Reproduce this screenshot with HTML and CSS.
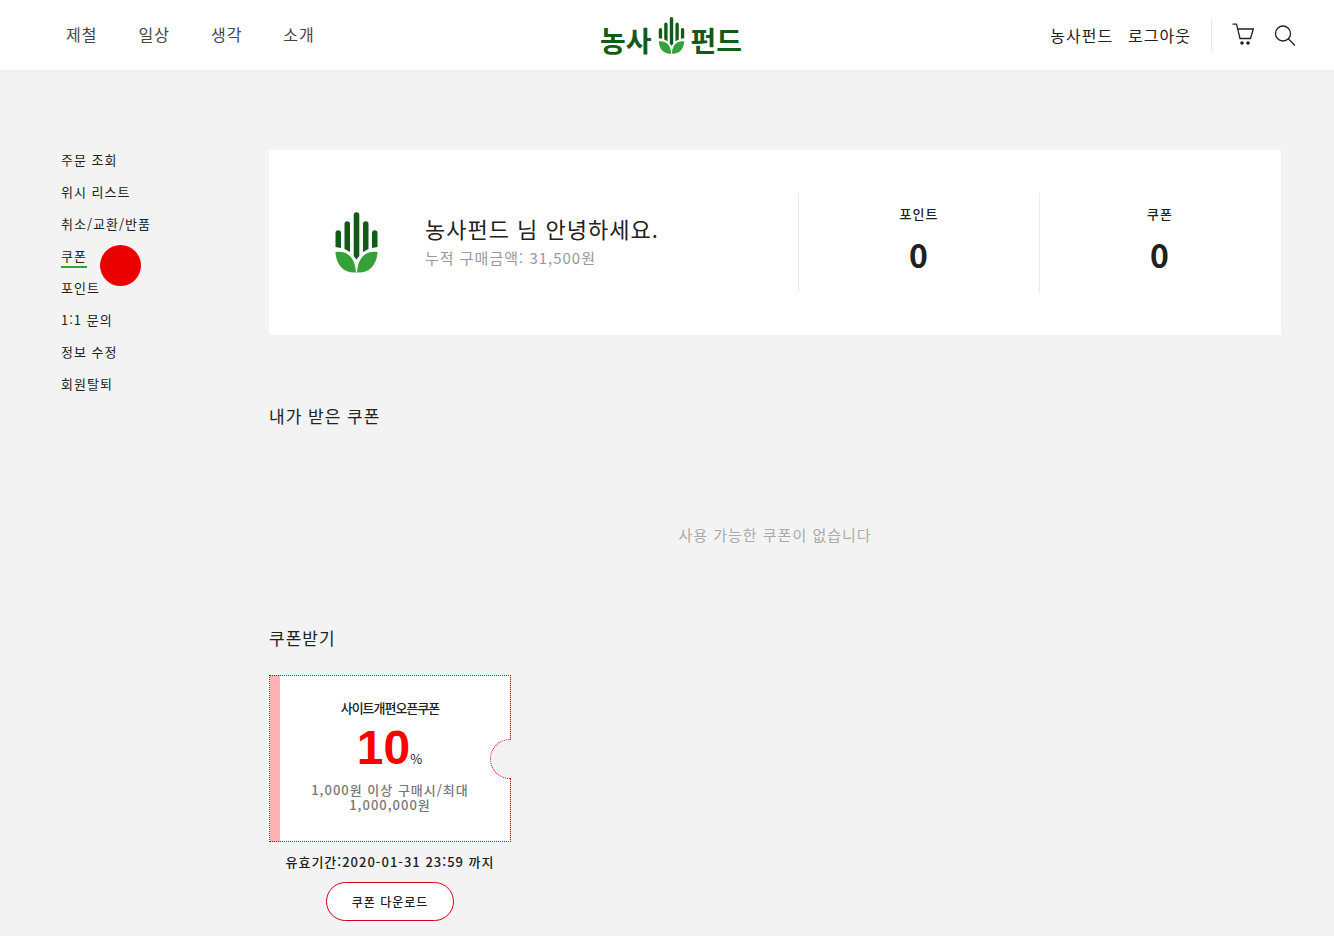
FILE: index.html
```html
<!DOCTYPE html>
<html lang="ko">
<head>
<meta charset="utf-8">
<meta name="viewport" content="width=device-width, initial-scale=1">
<title>농사펀드 - 쿠폰</title>
<link rel="stylesheet" href="styles.css">
</head>
<body>
<svg class="symbols" aria-hidden="true">
  <symbol id="hand" viewBox="0 0 43 61">
    <g fill="#125a18">
      <path d="M.5 21a2.750 2.750 0 0 1 5.500 0V36L.5 35z"/>
      <path d="M9.500 12a2.750 2.750 0 0 1 5.500 0V40L9.500 37z"/>
      <path d="M18.700 3a2.800 2.800 0 0 1 5.600 0V44L21.500 47.500 18.700 44z"/>
      <path d="M28 12a2.750 2.750 0 0 1 5.500 0V37L28 40z"/>
      <path d="M37 21a2.750 2.750 0 0 1 5.500 0V35L37 36z"/>
    </g>
    <g fill="#37a139">
      <path d="M.5 40C12 38.500 20 45 21 60.500 9 61.500 1 53 .5 40z"/>
      <path d="M42.500 40C31 38.500 23 45 22 60.500 34 61.500 42 53 42.500 40z"/>
    </g>
  </symbol>
</svg>

<header class="header">
  <nav class="menu" aria-label="주 메뉴">
    <a href="#">제철</a>
    <a href="#">일상</a>
    <a href="#">생각</a>
    <a href="#">소개</a>
  </nav>
  <a class="logo" href="#">
    <span>농사</span>
    <svg class="logo-mark" aria-hidden="true"><use href="#hand"/></svg>
    <span>펀드</span>
  </a>
  <div class="tools">
    <a href="#">농사펀드</a>
    <a href="#">로그아웃</a>
    <span class="divider"></span>
    <a class="icon-link" href="#" aria-label="장바구니">
      <svg width="22" height="24" viewBox="0 0 22 24" fill="none" stroke="#222" stroke-width="1.300">
        <path d="M.5 1.200H4.500L8 15.500H18.500L21.300 6H5.700"/>
        <circle cx="10" cy="20" r="1.800" fill="#222" stroke="none"/>
        <circle cx="16" cy="20" r="1.800" fill="#222" stroke="none"/>
      </svg>
    </a>
    <button class="icon-link" type="button" aria-label="검색">
      <svg width="22" height="22" viewBox="0 0 22 22" fill="none" stroke="#222" stroke-width="1.300">
        <circle cx="9" cy="9.500" r="7.500"/>
        <path d="M14.300 14.800L21 21.500"/>
      </svg>
    </button>
  </div>
</header>

<div class="page">
  <nav class="side" aria-label="마이페이지">
    <ul>
      <li><a href="#">주문 조회</a></li>
      <li><a href="#">위시 리스트</a></li>
      <li><a href="#">취소/교환/반품</a></li>
      <li class="current"><a href="#" aria-current="page">쿠폰</a><span class="pointer"></span></li>
      <li><a href="#">포인트</a></li>
      <li><a href="#">1:1 문의</a></li>
      <li><a href="#">정보 수정</a></li>
      <li><a href="#">회원탈퇴</a></li>
    </ul>
  </nav>

  <main class="content">
    <section class="summary">
      <div class="profile">
        <svg class="profile-mark" aria-hidden="true"><use href="#hand"/></svg>
        <div>
          <p class="greeting">농사펀드 님 안녕하세요.</p>
          <p class="total">누적 구매금액: 31,500원</p>
        </div>
      </div>
      <div class="stat"><span>포인트</span><strong>0</strong></div>
      <div class="stat"><span>쿠폰</span><strong>0</strong></div>
    </section>

    <h2>내가 받은 쿠폰</h2>
    <p class="empty">사용 가능한 쿠폰이 없습니다</p>

    <h2>쿠폰받기</h2>
    <article class="coupon">
      <div class="ticket">
        <h3>사이트개편오픈쿠폰</h3>
        <p class="rate"><strong>10</strong>%</p>
        <p class="terms">1,000원 이상 구매시/최대 1,000,000원</p>
        <span class="notch"></span>
      </div>
      <p class="valid">유효기간:2020-01-31 23:59 까지</p>
      <button class="download" type="button">쿠폰 다운로드</button>
    </article>
  </main>
</div>
</body>
</html>
```
FILE: styles.css
```css
* { box-sizing: border-box; }

body {
  margin: 0;
  background: #f3f3f3;
  color: #212121;
  font-family: "Noto Sans CJK KR", sans-serif;
  font-size: 13px;
  line-height: 20px;
  letter-spacing: 1px;
}

h2, h3, p, ul { margin: 0; padding: 0; font-weight: 400; }
ul { list-style: none; }
a { color: inherit; text-decoration: none; }
button { font: inherit; letter-spacing: inherit; color: inherit; cursor: pointer; }

.symbols { display: none; }

.header {
  display: grid;
  grid-template-columns: 1fr auto 1fr;
  align-items: center;
  height: 70px;
  padding: 0 38px 0 46px;
  background: #fff;
  font-size: 16px;
}

.menu { display: flex; gap: 41px; padding: 0 0 2px 20px; color: #444; }

.logo {
  display: flex;
  align-items: center;
  gap: 6px;
  color: #125a18;
  font-size: 28px;
  font-weight: 700;
  line-height: 36px;
  letter-spacing: 0;
}
.logo span { padding-top: 9px; }
.logo-mark { width: 27px; height: 37px; }

.tools { display: flex; align-items: center; justify-content: flex-end; gap: 15px; }
.divider { width: 1px; height: 32px; margin: 0 5px; background: #e5e5e5; }
.icon-link { display: flex; padding: 0; border: 0; background: none; }
.icon-link + .icon-link { margin-left: 5px; }

.page { display: flex; padding: 80px 53px 15px 61px; }

.side { flex: 0 0 208px; font-weight: 500; }
.side li { height: 32px; }
.side a { display: inline-block; }
.current { position: relative; }
.current a { border-bottom: 2px solid #37a139; }
.pointer {
  position: absolute;
  left: 39px;
  top: -1px;
  width: 41px;
  height: 41px;
  border-radius: 50%;
  background: #eb0000;
}

.content { flex: 1; min-width: 0; }

.summary {
  display: flex;
  align-items: center;
  margin-bottom: 69px;
  padding: 43px 1px 42px 0;
  background: #fff;
}
.profile { flex: 1; display: flex; align-items: center; gap: 47px; padding: 0 0 2px 66px; }
.profile-mark { width: 43px; height: 61px; }
.greeting { font-size: 22px; line-height: 32px; }
.total { color: #999; font-size: 15px; line-height: 28px; }

.stat {
  flex: 0 0 241px;
  display: flex;
  flex-direction: column;
  align-items: center;
  gap: 10px;
  height: 100px;
  padding-top: 11px;
  border-left: 1px solid #eaeaea;
  font-weight: 500;
}
.stat strong { font-size: 32px; line-height: 40px; font-weight: 700; }

h2 { font-size: 17px; line-height: 24px; }
.empty { padding: 95px 0 79px; color: #aaa; font-size: 15px; line-height: 24px; text-align: center; }

.coupon { width: 242px; margin-top: 25px; text-align: center; }
.ticket {
  position: relative;
  padding: 22px 36px 29px;
  border: 1px dotted #b5121b;
  background: linear-gradient(to right, #ffb3b3 10px, #fff 10px);
}
.ticket h3 { font-size: 13px; font-weight: 500; letter-spacing: -1px; }
.rate {
  display: flex;
  align-items: baseline;
  justify-content: center;
  margin: 10px 0 3px;
  line-height: 40px;
}
.rate strong {
  color: #f00;
  font-family: "Liberation Sans", Arial, sans-serif;
  font-size: 48px;
  letter-spacing: 0;
}
.terms { color: #777; line-height: 15px; font-weight: 500; }
.notch {
  position: absolute;
  top: 63px;
  right: -1px;
  width: 21px;
  height: 40px;
  border: 1px dotted #e0001b;
  border-right: 0;
  border-radius: 20px 0 0 20px;
  background: #f3f3f3;
}
.valid { margin: 10px 0; font-weight: 500; }
.download {
  padding: 9px 25px 8px;
  border: 1px solid #d0021b;
  border-radius: 20px;
  background: #fff;
  font-size: 12px;
  font-weight: 500;
}
```
